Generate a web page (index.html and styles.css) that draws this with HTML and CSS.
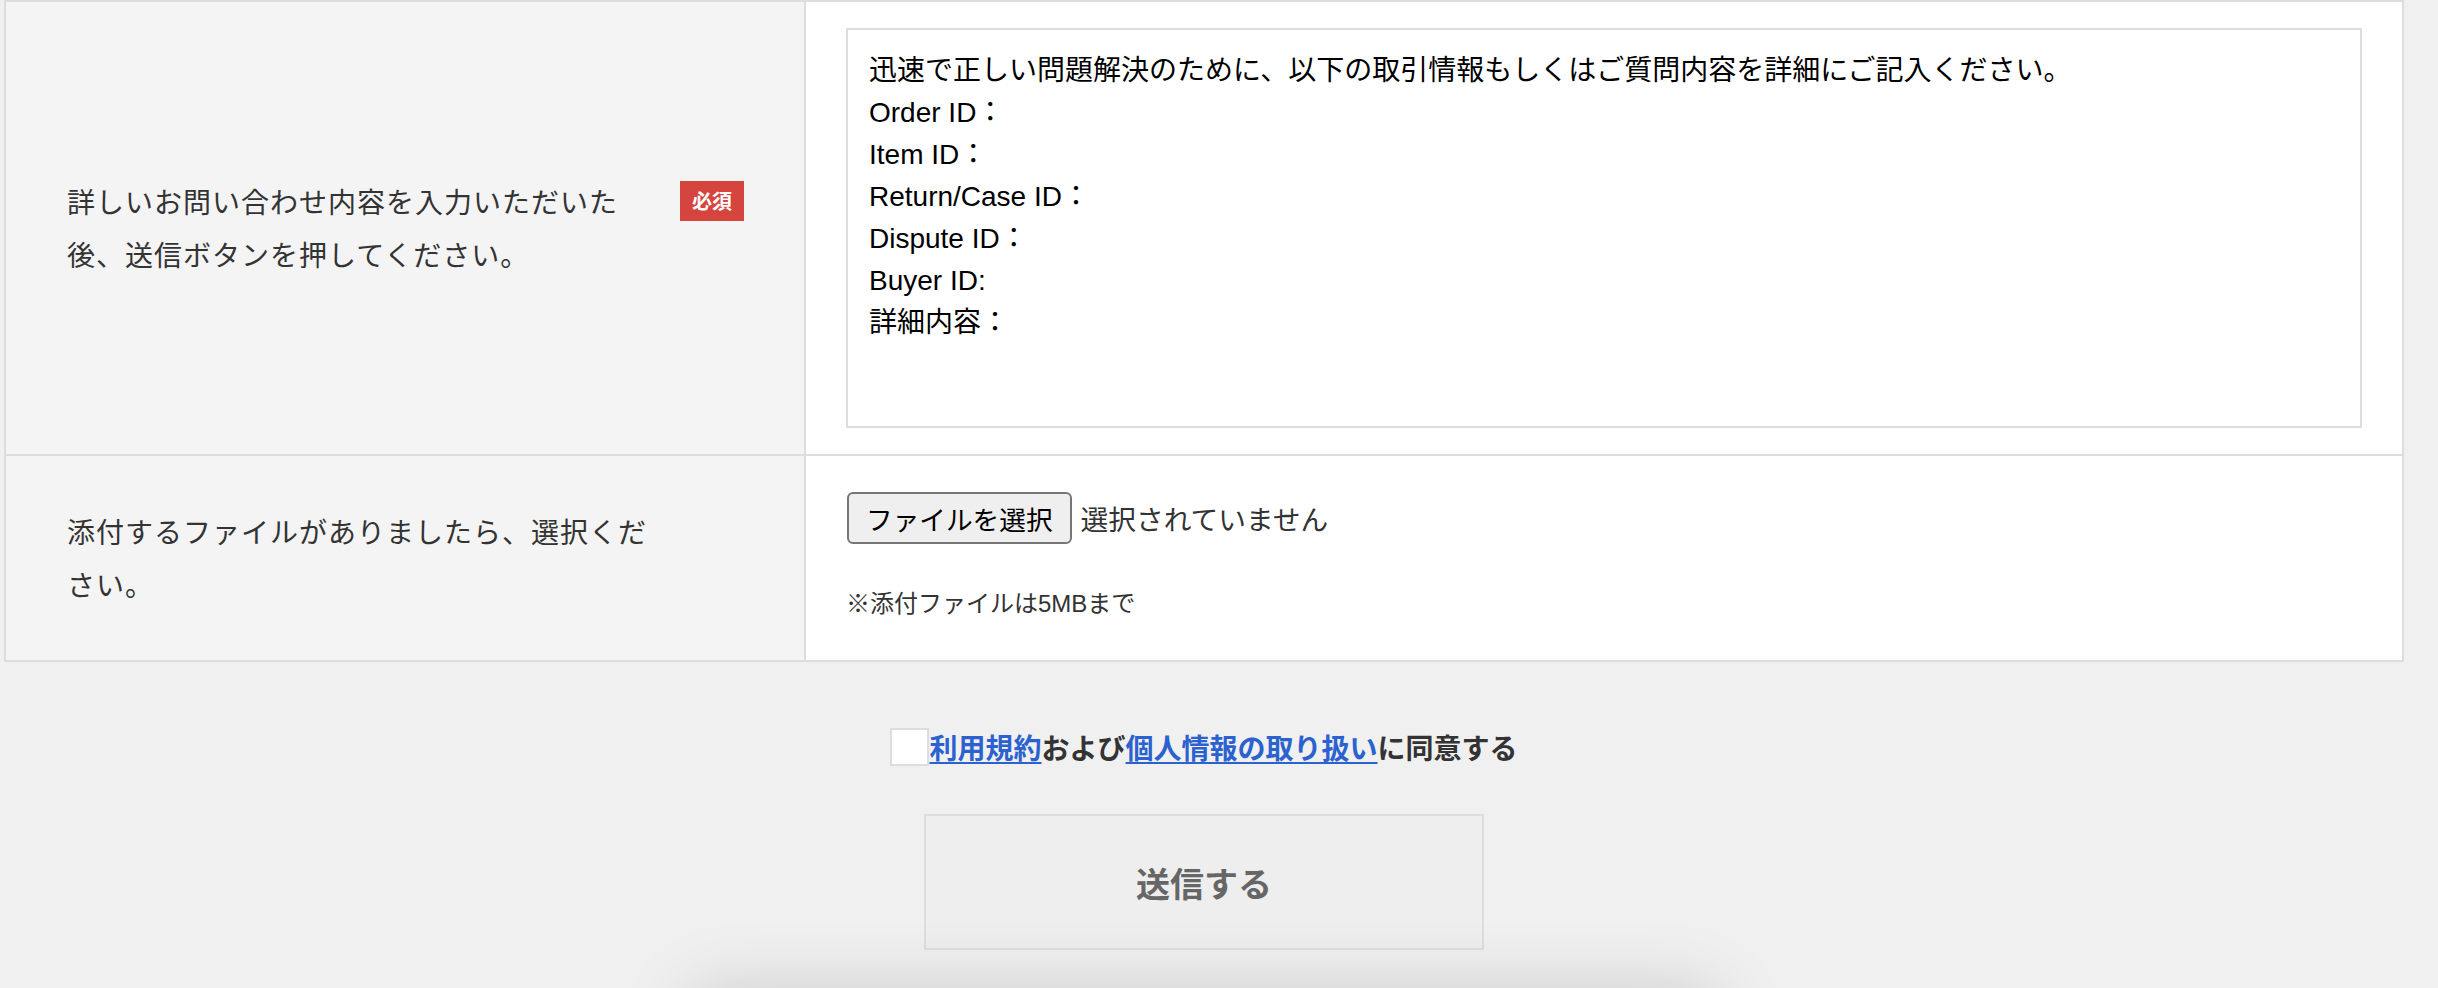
FILE: index.html
```html
<!DOCTYPE html>
<html lang="ja">
<head>
<meta charset="utf-8">
<title>お問い合わせ</title>
<link rel="stylesheet" href="styles.css">
</head>
<body>
<main class="page">
  <div class="form-table">
    <div class="row">
      <div class="label-cell">
        <div class="label">
          <p class="label-text">詳しいお問い合わせ内容を入力いただいた後、送信ボタンを押してください。</p>
          <span class="badge">必須</span>
        </div>
      </div>
      <div class="field-cell field-cell--textarea">
        <textarea class="message" rows="8">迅速で正しい問題解決のために、以下の取引情報もしくはご質問内容を詳細にご記入ください。
Order ID：
Item ID：
Return/Case ID：
Dispute ID：
Buyer ID:
詳細内容：</textarea>
      </div>
    </div>
    <div class="row">
      <div class="label-cell">
        <div class="label">
          <p class="label-text">添付するファイルがありましたら、選択ください。</p>
        </div>
      </div>
      <div class="field-cell field-cell--file">
        <div class="file-picker">
          <span class="file-button">ファイルを選択</span>
          <span class="file-status">選択されていません</span>
        </div>
        <p class="file-note">※添付ファイルは5MBまで</p>
      </div>
    </div>
  </div>

  <div class="actions">
    <label class="agree">
      <input type="checkbox" class="agree-box">
      <span class="agree-text"><a href="#" class="link">利用規約</a>および<a href="#" class="link">個人情報の取り扱い</a>に同意する</span>
    </label>
    <button type="submit" class="submit">送信する</button>
    <div class="next-card"></div>
  </div>
</main>
</body>
</html>
```

FILE: styles.css
```css
html, body {
  margin: 0;
  padding: 0;
}

body {
  background: #f0f0f0;
  font-family: "Liberation Sans", "Noto Sans CJK JP", sans-serif;
  color: #333;
}

.page {
  height: 988px;
  overflow: hidden;
}

.form-table {
  margin-left: 4px;
  width: 2400px;
  box-sizing: border-box;
  border-top: 2px solid #dddddd;
  border-left: 2px solid #dddddd;
}

.row {
  display: grid;
  grid-template-columns: 800px 1fr;
}

.label-cell {
  box-sizing: border-box;
  background: #f4f4f4;
  border-right: 2px solid #dddddd;
  border-bottom: 2px solid #dddddd;
  padding: 0 60px 0 61px;
  display: flex;
  align-items: center;
}

.label {
  display: flex;
  align-items: flex-start;
  justify-content: space-between;
  width: 100%;
}

.label-text {
  margin: 0;
  width: 595px;
  font-family: "Noto Sans CJK JP", sans-serif;
  font-size: 28px;
  line-height: 53px;
  letter-spacing: 1px;
  color: #333;
}

.badge {
  margin-top: 6px;
  height: 40px;
  line-height: 40px;
  padding: 0 12px;
  background: #d6443e;
  color: #fff;
  font-family: "Noto Sans CJK JP", sans-serif;
  font-weight: 700;
  font-size: 20px;
}

.field-cell {
  box-sizing: border-box;
  background: #ffffff;
  border-right: 2px solid #dddddd;
  border-bottom: 2px solid #dddddd;
}

.field-cell--textarea {
  padding: 26px 40px;
}

.message {
  display: block;
  box-sizing: border-box;
  width: 100%;
  height: 400px;
  margin: 0;
  padding: 20px 21px 18px;
  border: 2px solid #dddddd;
  border-radius: 0;
  background: #fff;
  color: #000;
  font-family: "Liberation Sans", "Noto Sans CJK JP", sans-serif;
  font-size: 28px;
  line-height: 42px;
  resize: none;
  outline: none;
}

.field-cell--file {
  padding: 36px 40px 38px;
}

.file-picker {
  display: flex;
  align-items: center;
  gap: 9px;
}

.file-button {
  box-sizing: border-box;
  height: 52px;
  display: inline-flex;
  align-items: center;
  padding: 0 17px;
  border: 2px solid #767676;
  border-radius: 6px;
  background: #efefef;
  color: #000;
  font-family: "Noto Sans CJK JP", sans-serif;
  font-size: 26.67px;
  margin-left: 1px;
}

.file-status {
  font-family: "Noto Sans CJK JP", sans-serif;
  font-size: 27.7px;
  color: #333;
}

.file-note {
  margin: 42px 0 0;
  font-family: "Liberation Sans", "Noto Sans CJK JP", sans-serif;
  font-size: 24px;
  line-height: 36px;
  color: #333;
}

.actions {
  margin-left: 4px;
  width: 2400px;
  display: flex;
  flex-direction: column;
  align-items: center;
}

.agree {
  margin-top: 66px;
  display: flex;
  align-items: center;
  cursor: pointer;
}

.agree-box {
  -webkit-appearance: none;
  appearance: none;
  box-sizing: border-box;
  width: 39px;
  height: 38px;
  margin: 0;
  background: #fff;
  border: 2px solid #dddddd;
  border-radius: 0;
}

.agree-text {
  font-family: "Noto Sans CJK JP", sans-serif;
  font-weight: 700;
  font-size: 28px;
  line-height: 38px;
  color: #333;
}

.link {
  color: #2b62cf;
  text-decoration: underline;
  text-decoration-thickness: 2px;
  text-underline-offset: 3px;
}

.submit {
  margin-top: 48px;
  box-sizing: border-box;
  width: 560px;
  height: 136px;
  border: 2px solid #dddddd;
  background: #eeeeee;
  color: #666;
  font-family: "Noto Sans CJK JP", sans-serif;
  font-weight: 700;
  font-size: 34px;
  cursor: pointer;
}

.next-card {
  margin-top: 56px;
  width: 1000px;
  height: 200px;
  background: #f0f0f0;
  box-shadow: 0 0 70px 10px rgba(0, 0, 0, 0.18);
}
```
